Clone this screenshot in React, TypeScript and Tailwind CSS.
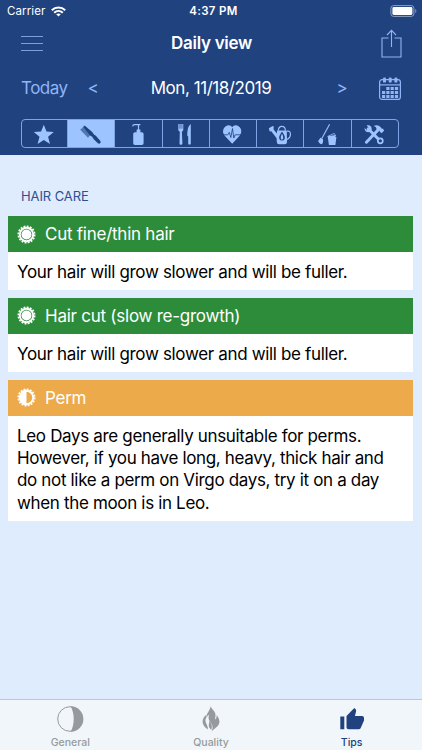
import { useState } from "react";
import type { ReactNode } from "react";

const categories: { id: string; label: string; icon: ReactNode }[] = [
  {
    id: "favorites",
    label: "Favorites",
    icon: <path d="M14.800 2.800l2.700 6.800 7.300.5-5.700 4.600 1.900 7.300-6.200-4-6.200 4 1.900-7.300-5.700-4.600 7.300-.5z" />,
  },
  {
    id: "hair",
    label: "Hair care",
    icon: (
      <>
        <path d="M8 4.200l8 6.800-4 4.800-7.800-8z" opacity=".6" />
        <path d="M8.600 3.400l7.600 6.700c.9.800.9 1.900 2 2.700 1.100.6 1.700 1 2.500 1.900l3.700 4.300c1 1.600-.8 3.500-2.500 2.300l-3.900-3.700c-.9-.9-1-1.900-1.800-2.800-1-.7-1.700-.9-2.400-1.600L7.300 5z" />
      </>
    ),
  },
  {
    id: "body",
    label: "Body care",
    icon: (
      <>
        <path d="M12 10.200h1.600V7.600h3.800v2.600h1.400a1.800 1.800 0 0 1 1.800 1.800v9.200a1.800 1.800 0 0 1-1.800 1.800H12a1.800 1.800 0 0 1-1.800-1.800V12a1.800 1.800 0 0 1 1.800-1.800z" />
        <path d="M15.500 8V2.600M9.600 4.400c.2-1.200.9-1.700 2-1.700h5.800" fill="none" stroke="currentColor" strokeWidth="1.200" />
      </>
    ),
  },
  {
    id: "food",
    label: "Food",
    icon: (
      <>
        <path d="M8.300 2h5v5.600c0 1.300-.7 1.800-1.400 2.200l.5 11.400c0 2-2.900 2-2.900 0l.3-11.400c-.8-.4-1.500-.9-1.500-2.200z" />
        <path d="M9.700 2v4.600M10.900 2v4.600M12.100 2v4.600" stroke="#20427f" strokeWidth=".5" />
        <path d="M20.800 2v19.400c0 1.600-2.600 1.600-2.600 0v-6.800l-.9-.8c-.1-5 .6-9.800 3.500-11.800z" />
      </>
    ),
  },
  {
    id: "health",
    label: "Health",
    icon: (
      <>
        <path d="M15.200 21.700L7.700 13.700C3.600 8.500 8 3.200 11.500 3.200c1.800 0 3 .8 3.700 2 .7-1.200 1.900-2 3.700-2 3.500 0 7.900 5.300 3.800 10.500z" />
        <path
          d="M6 12.800h4.800l1.500-2.500 1.500 5.200 1.700-9 1.300 9.500 1.200-3.200h6"
          fill="none"
          stroke="#20427f"
          strokeWidth=".8"
        />
      </>
    ),
  },
  {
    id: "garden",
    label: "Garden",
    icon: (
      <>
        <path d="M3.800 6.300l4.400-2.500.7 2.200-.6 1 3.500 4.500.2-2.900h9.800l.2 11.200c0 1.700-1 2.500-2.400 2.500h-5.400c-1.500 0-2.300-.8-2.400-2.500l-.2-3.600-5.300-7-1.600.2z" />
        <path
          d="M13.400 8.500c.1-5.500 6.900-5.500 7 0M21.900 9.300c4.800-1.700 4.600 6.300.1 8.200"
          fill="none"
          stroke="currentColor"
          strokeWidth="1.200"
        />
        <path d="M17 9.600c2.200 3.200 3.100 5 2.800 6.600-.4 3.100-5.200 3.100-5.600 0-.3-1.600.6-3.400 2.800-6.600z" fill="#20427f" />
        <path d="M17 11.800c1.500 2.600 1.700 5.900 0 5.900s-1.500-3.300 0-5.900z" />
      </>
    ),
  },
  {
    id: "household",
    label: "Household",
    icon: (
      <>
        <path d="M17.600 2.300L9.800 16.500" fill="none" stroke="currentColor" strokeWidth="1.100" />
        <path d="M8.400 15.700l2.400 1.200c.6 2 .3 4-1 5.400-1.700-.5-3-1.700-3.600-3.400z" />
        <path d="M15.600 14.200l7.900-1.300v2.200h.9L23.400 23h-6.500l-1-7z" />
        <path d="M15.700 14.400l6.500-3 1.600 2.500" fill="none" stroke="currentColor" strokeWidth=".8" />
      </>
    ),
  },
  {
    id: "repairs",
    label: "Repairs",
    icon: (
      <>
        <path
          d="M9.200 6.800l11.300 11.500M19.500 7.500L7.400 20.200"
          fill="none"
          stroke="currentColor"
          strokeWidth="3"
          strokeLinecap="round"
        />
        <path d="M7.600 3.500c3-1 5.700.9 5 4.600l-1.800 2c-2.800.7-5.300-.9-5.300-4.200L8 8l2-1.700z" />
        <path d="M14.500 4c3.300-1.700 6.700-.6 8.200 2.700l1-.3 1.500 2-2.600 2.800-2-1.600.1-1.200-2 .1-1.300-1.200c.2-1.600-.6-2.700-2.900-3.300z" />
        <circle cx="21.300" cy="18.800" r="2.500" fill="#20427f" stroke="currentColor" strokeWidth="1.700" />
      </>
    ),
  },
];

type Rating = "good" | "neutral";

const tips: { title: string; text: string; rating: Rating }[] = [
  { title: "Cut fine/thin hair", text: "Your hair will grow slower and will be fuller.", rating: "good" },
  { title: "Hair cut (slow re-growth)", text: "Your hair will grow slower and will be fuller.", rating: "good" },
  {
    title: "Perm",
    text: "Leo Days are generally unsuitable for perms. However, if you have long, heavy, thick hair and do not like a perm on Virgo days, try it on a day when the moon is in Leo.",
    rating: "neutral",
  },
];

function StatusBar() {
  return (
    <div className="grid h-[22px] grid-cols-3 items-center pl-[7px] pr-[5px] text-[11.5px] text-white">
      <div className="flex items-center gap-1.5">
        <span className="pt-px tracking-[0.1px]">Carrier</span>
        <svg viewBox="0 0 15 11" className="h-[11px] w-[15px]" fill="none" stroke="currentColor" strokeWidth="2">
          <path d="M.8 4.200c3.800-3.700 9.600-3.700 13.400 0M3.200 6.700c2.500-2.400 6.100-2.400 8.600 0" />
          <path d="M7.500 10.500L5.200 8.300c1.300-1.200 3.300-1.200 4.600 0z" fill="currentColor" stroke="none" />
        </svg>
      </div>
      <span className="pl-[3px] pt-px text-center font-semibold tracking-[0.35px]">4:37 PM</span>
      <svg viewBox="0 0 27 12" className="h-3 w-[27px] justify-self-end" fill="none">
        <rect x=".9" y=".6" width="23" height="10.800" rx="2.600" stroke="#8fa0bf" />
        <rect x="2.400" y="2" width="20" height="8" rx="1.400" fill="#fff" />
        <path d="M25.300 4v4c1.400-.5 1.400-3.500 0-4z" fill="#8fa0bf" />
      </svg>
    </div>
  );
}

function CalendarIcon() {
  return (
    <svg viewBox="0 0 22 23" className="h-[23px] w-[22px]" fill="currentColor">
      <rect x=".6" y="2.600" width="20.800" height="19.800" rx="2.500" fill="none" stroke="currentColor" strokeWidth="1.200" />
      <path d="M1 7.300h20v1.200H1z" />
      {[4, 9.700, 15.400].map((x) => (
        <rect key={x} x={x} y=".4" width="3" height="5.200" rx="1.200" />
      ))}
      {[0, 1, 2].map((row) =>
        [0, 1, 2, 3].map((col) =>
          row === 0 && col === 0 ? null : (
            <rect key={`${row}-${col}`} x={3 + col * 4.300} y={10 + row * 4} width="3.200" height="3" />
          )
        )
      )}
    </svg>
  );
}

function SunIcon({ rating }: { rating: Rating }) {
  return (
    <svg viewBox="-9.500 -9.500 19 19" className="h-[19px] w-[19px]">
      <circle r="8.200" fill="none" stroke="#fff" strokeWidth="1.600" strokeDasharray="1.900 1.320" />
      <circle r="6.700" fill="none" stroke="#fff" strokeWidth="1.900" />
      {rating === "good" ? <circle r="5" fill="#fff" /> : <path d="M0-6.500v13a6.500 6.500 0 0 1 0-13z" fill="#fff" />}
    </svg>
  );
}

const tabs: { id: string; label: string; icon: ReactNode }[] = [
  {
    id: "general",
    label: "General",
    icon: (
      <>
        <circle cx="15" cy="14" r="12.300" fill="none" stroke="currentColor" strokeWidth="1" />
        <path d="M15.600 1.200a12.800 12.800 0 0 1 0 25.600c4.200-7 4.200-18.600 0-25.600z" />
      </>
    ),
  },
  {
    id: "quality",
    label: "Quality",
    icon: (
      <>
        <path d="M14.800 1c-.1 3 4.800 4.500 4.700 9.200 0 1.800-.5 2.900-.4 4.300 1.200-.9 1.700-2.300 1.500-4.500 1.700 2 2.800 4.200 2.800 6.700 0 4.300-4 5.800-7.800 9.700 1.500-3.500 1.300-5.900-.8-8.600-2.200-2.700-3-5-1.500-8.300-3 2.300-4.500 4.700-3.600 7.500.7 2.500 2.500 4 2.200 7.600-2.500-1.800-5.300-4.300-5.300-8 0-2.700 1.300-4.700 3.300-6.600 0 1 0 1.500.3 2.200C10.700 8 14 5.500 14.800 1z" />
        <path d="M13.300 15.800c.3 2.200-.9 3.800-.4 5.700.3 1.400 1.300 2.200 2.200 3.500 1.600-3.200.5-6.700-1.800-9.200z" />
      </>
    ),
  },
  {
    id: "tips",
    label: "Tips",
    icon: (
      <path d="M3.300 11.500h4v12.700h-4zM9.500 11l7.800-8 1.300 1.300c.5.600.6 1 .5 1.700l-1.100 5H25c1.200 0 2 .8 2 2v2.500l-3.300 7.600c-.4.800-1 1.200-1.900 1.200H11.700c-1.400 0-2.200-.8-2.200-2.200z" />
    ),
  },
];

export default function App() {
  const [activeCategory, setActiveCategory] = useState("hair");
  const [activeTab, setActiveTab] = useState("tips");

  return (
    <div className="flex h-[750px] w-[422px] flex-col overflow-hidden bg-[#dfecfd] font-[Inter,'Liberation_Sans',sans-serif]">
      <header className="h-[155px] shrink-0 bg-[#20427f] text-[#8fb5f6]">
        <StatusBar />

        <div className="grid h-11 grid-cols-3 items-center pl-[21px] pr-[20px]">
          <button aria-label="Menu" className="mb-[2px] flex w-[22px] flex-col gap-[6px]">
            <span className="h-px w-full bg-[#7d9fdd]" />
            <span className="h-px w-full bg-[#7d9fdd]" />
            <span className="h-px w-full bg-[#7d9fdd]" />
          </button>
          <h1 className="whitespace-nowrap text-center text-[17px] font-semibold tracking-[-0.3px] text-white">
            Daily view
          </h1>
          <button aria-label="Share" className="mb-[2px] justify-self-end">
            <svg viewBox="0 0 21 29" className="h-[29px] w-[21px]" fill="none" stroke="currentColor" strokeWidth="1.100">
              <path d="M7.500 9H1v19h19V9h-6.500M10.500 18V1.500M6 6l4.500-4.700L15 6" />
            </svg>
          </button>
        </div>

        <div className="flex h-[45px] items-center px-[21px] text-[17px]">
          <button className="w-[66px] text-left tracking-[-0.5px]">Today</button>
          <button aria-label="Previous day" className="w-[12px] text-[17px]">&lt;</button>
          <span className="flex-1 pr-[13px] text-center tracking-[-0.45px] text-white">Mon, 11/18/2019</span>
          <button aria-label="Next day" className="w-[12px] text-[17px]">&gt;</button>
          <button aria-label="Calendar" className="ml-[31px]">
            <CalendarIcon />
          </button>
        </div>

        <div className="mx-[21px] mt-[8px] flex h-[29px] w-[378px] overflow-hidden rounded border border-[#7fa4e6]">
          {categories.map((category) => (
            <button
              key={category.id}
              aria-label={category.label}
              onClick={() => setActiveCategory(category.id)}
              className={`flex flex-1 items-center justify-center border-l border-[#7fa4e6] first:w-[45px] first:flex-none first:border-l-0 ${
                category.id === activeCategory ? "bg-[#9dc4ff] text-[#20427f]" : "text-[#9dc4ff]"
              }`}
            >
              <svg viewBox="0 0 30 24" className="mr-px h-6 w-[30px]" fill="currentColor">
                {category.icon}
              </svg>
            </button>
          ))}
        </div>
      </header>

      <main className="flex-1 pl-2 pr-[9px]">
        <h2 className="h-[61px] pl-[13px] pt-[31px] text-[13px] leading-5 tracking-[-0.1px] text-[#2f4f91]">HAIR CARE</h2>
        <div className="flex flex-col gap-2">
          {tips.map((tip) => (
            <section key={tip.title} className="bg-white">
              <h3
                className={`flex h-9 items-center gap-[9px] pl-[9px] text-[17px] tracking-[-0.25px] text-white ${
                  tip.rating === "good" ? "bg-[#2d8c3a]" : "bg-[#ecaa4b]"
                }`}
              >
                <SunIcon rating={tip.rating} />
                <span className="pt-[2px]">{tip.title}</span>
              </h3>
              <p className="pb-[6.500px] pl-[9px] pr-4 pt-[9.100px] text-[17px] leading-[22.300px] tracking-[-0.34px] text-black">
                {tip.text}
              </p>
            </section>
          ))}
        </div>
      </main>

      <nav className="flex h-[51px] shrink-0 border-t border-[#b9c8df] bg-[#f0f6f9]">
        {tabs.map((tab) => (
          <button
            key={tab.id}
            onClick={() => setActiveTab(tab.id)}
            className={`flex flex-1 flex-col items-center pt-[5px] ${
              tab.id === activeTab ? "text-[#20427f]" : "text-[#979a9c]"
            }`}
          >
            <svg viewBox="0 0 30 28" className="h-7 w-[30px]" fill="currentColor">
              {tab.icon}
            </svg>
            <span className="mt-[3px] text-[10.500px] font-medium leading-[14px]">{tab.label}</span>
          </button>
        ))}
      </nav>
    </div>
  );
}
